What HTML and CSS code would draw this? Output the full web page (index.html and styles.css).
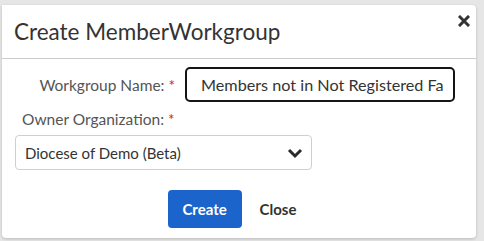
FILE: index.html
```html
<!DOCTYPE html>
<html>
<head>
  <title>Create MemberWorkgroup</title>
  <link rel="stylesheet" href="styles.css">
</head>
<body>
  <div class="modal">
    <div class="modal-header">
      <h4 class="modal-title">Create MemberWorkgroup</h4>
      <button class="close" type="button" aria-label="Close">
        <svg width="12" height="12" viewBox="0 0 12 12"><path d="M2 2 L10 10 M10 2 L2 10" stroke="#333" stroke-width="3" stroke-linecap="square"/></svg>
      </button>
    </div>
    <div class="modal-body">
      <div class="row-inline">
        <label class="label-right">Workgroup Name: <span class="req">*</span></label>
        <input class="text-input" type="text" value="Members not in Not Registered Fa">
      </div>
      <div class="row-stack">
        <label>Owner Organization: <span class="req">*</span></label>
        <div class="select">
          <span>Diocese of Demo (Beta)</span>
          <svg width="16" height="12" viewBox="0 0 16 12"><path d="M2 3 L8 9 L14 3" fill="none" stroke="#2b2b2b" stroke-width="3"/></svg>
        </div>
      </div>
      <div class="actions">
        <button class="btn-primary" type="button">Create</button>
        <button class="btn-link" type="button">Close</button>
      </div>
    </div>
  </div>
</body>
</html>
```

FILE: styles.css
```css
body {
  margin: 0;
  width: 484px;
  height: 241px;
  background-color: #e6e6e6;
  font-family: "Lato", sans-serif;
  overflow: hidden;
}

.modal {
  margin: 5px 8px 0 2px;
  height: 233px;
  background: #ffffff;
  border-radius: 0 4px 4px 4px;
  box-shadow: 0 1px 3px rgba(0, 0, 0, 0.2);
}

.modal-header {
  display: flex;
  justify-content: space-between;
  align-items: flex-start;
  height: 53px;
  border-bottom: 1px solid #cccccc;
  padding: 0 6px 0 12px;
}

.modal-title {
  margin: 13px 0 0;
  font-size: 22.5px;
  font-weight: 400;
  color: #333333;
}

.close {
  margin-top: 10px;
  padding: 0;
  border: none;
  background: none;
}

.modal-body {
  padding: 8px 21px 0 13px;
}

.row-inline {
  display: flex;
  align-items: center;
  gap: 10px;
}

.label-right {
  width: 160px;
  text-align: right;
  font-size: 15.5px;
  color: #555555;
}

.req {
  color: #e02020;
}

.text-input {
  flex: 1;
  min-width: 0;
  height: 35px;
  box-sizing: border-box;
  border: 2px solid #151515;
  border-radius: 5px;
  padding: 0 0 0 14px;
  font-family: inherit;
  font-size: 16.2px;
  color: #333333;
  outline: none;
}

.row-stack {
  margin-top: 8px;
  padding-left: 7px;
}

.row-stack label {
  display: block;
  font-size: 15.5px;
  color: #555555;
  margin-bottom: 7px;
}

.select {
  display: flex;
  justify-content: space-between;
  align-items: center;
  width: 297px;
  height: 35px;
  box-sizing: border-box;
  border: 1px solid #cfcfcf;
  border-radius: 4px;
  padding: 0 8px 0 9px;
  margin-left: -7px;
  font-size: 15px;
  color: #333333;
}

.actions {
  display: flex;
  justify-content: center;
  align-items: center;
  gap: 8px;
  margin-top: 20px;
  padding-left: 4px;
}

.btn-primary {
  width: 74px;
  height: 38px;
  border: none;
  border-radius: 4px;
  background-color: #1a64cc;
  color: #ffffff;
  font-family: inherit;
  font-size: 15px;
  font-weight: bold;
}

.btn-link {
  padding: 0 10px;
  border: none;
  background: none;
  color: #333333;
  font-family: inherit;
  font-size: 15px;
  font-weight: bold;
}
```
